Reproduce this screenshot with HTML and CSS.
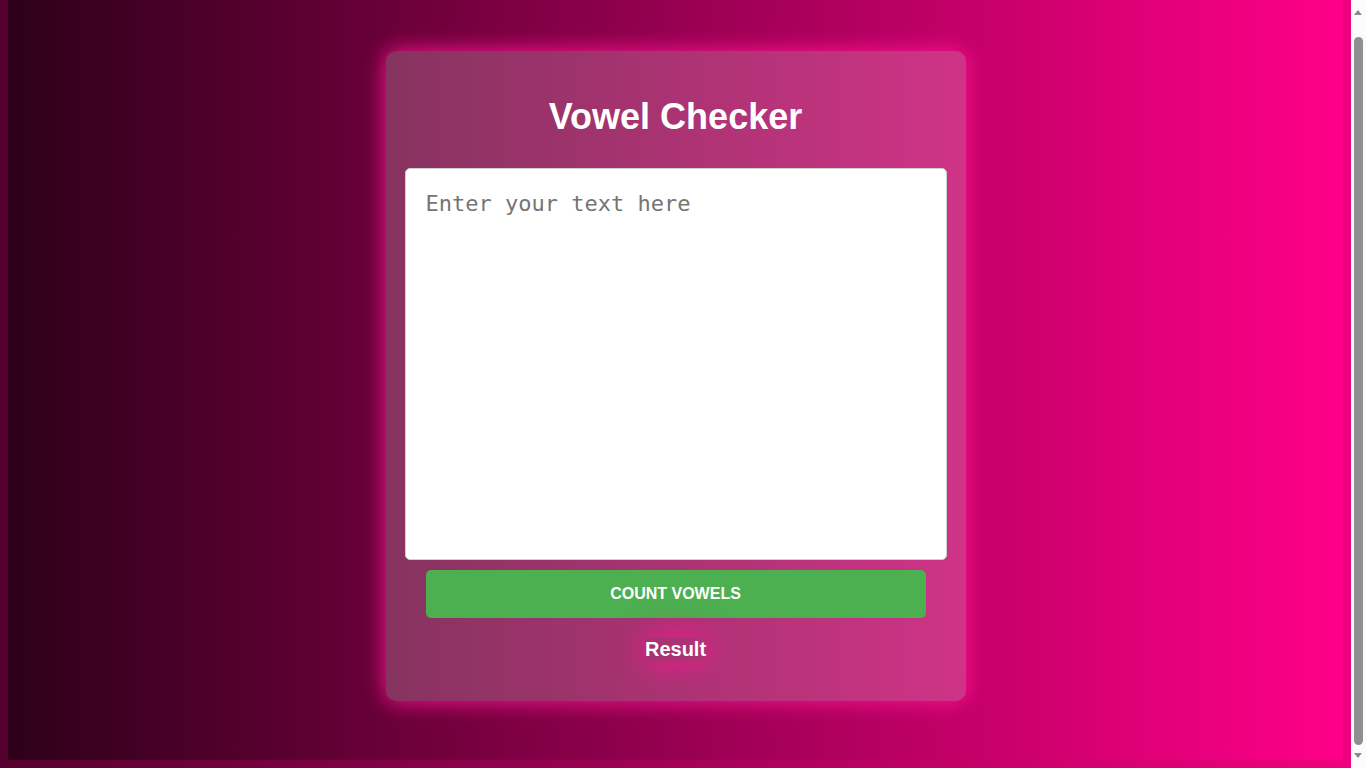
FILE: index.html
```html
<!DOCTYPE html>
<html lang="en">
<head>
<meta charset="utf-8">
<title>Vowel Checker</title>
<link rel="stylesheet" href="styles.css">
</head>
<body>
  <main class="card">
    <h1 class="title">Vowel Checker</h1>
    <textarea class="text-input" placeholder="Enter your text here"></textarea>
    <button class="count-btn" type="button">COUNT VOWELS</button>
    <div class="result">Result</div>
  </main>
  <div class="scrollbar" aria-hidden="true">
    <span class="sb-arrow sb-up"></span>
    <span class="sb-thumb"></span>
    <span class="sb-arrow sb-down"></span>
  </div>
  <script src="script.js"></script>
</body>
</html>
```

FILE: styles.css
```css
html {
  background: linear-gradient(to right, #56002f, #f2007f);
}

body {
  margin: 8px 23px 8px 8px;
  height: 100vh;
  display: flex;
  justify-content: center;
  align-items: center;
  background: linear-gradient(to right, #2e0019, #ff0088);
  font-family: "Liberation Sans", Arial, sans-serif;
}

.card {
  width: 540px;
  padding: 20px;
  display: flex;
  flex-direction: column;
  align-items: center;
  background: rgba(255, 255, 255, 0.2);
  border-radius: 10px;
  box-shadow: 0 0 22px #ff1493;
}

.title {
  margin: 25px 0 31px;
  font-size: 36px;
  font-weight: bold;
  line-height: 41px;
  color: #ffffff;
}

.text-input {
  box-sizing: border-box;
  width: 542px;
  margin: 0 -1px;
  height: 392px;
  padding: 20px;
  border: 1px solid #d0d0d0;
  border-radius: 5px;
  background: #ffffff;
  font-family: "DejaVu Sans Mono", monospace;
  font-size: 22px;
  line-height: 29px;
  resize: none;
  outline: none;
}

.text-input::placeholder {
  color: #757575;
}

.count-btn {
  width: 500px;
  height: 48px;
  margin-top: 10px;
  border: none;
  border-radius: 5px;
  background: #4caf50;
  color: #ffffff;
  font-family: "Liberation Sans", Arial, sans-serif;
  font-size: 16px;
  font-weight: bold;
  cursor: pointer;
}

.result {
  margin: 20px 0;
  font-size: 20px;
  font-weight: bold;
  line-height: 23px;
  color: #ffffff;
  box-shadow: 0 0 30px #ff1493;
}

.scrollbar {
  position: fixed;
  top: 0;
  right: 0;
  width: 15px;
  height: 100vh;
  background: #fbfbfb;
}

.sb-arrow {
  position: absolute;
  left: 3px;
  width: 0;
  height: 0;
  border-left: 4.5px solid transparent;
  border-right: 4.5px solid transparent;
}

.sb-up {
  top: 10px;
  border-bottom: 5px solid #8a8a8a;
}

.sb-down {
  bottom: 10px;
  border-top: 5px solid #8a8a8a;
}

.sb-thumb {
  position: absolute;
  top: 37px;
  bottom: 23px;
  left: 3px;
  width: 9px;
  border-radius: 5px;
  background: #8f8f8f;
}
```

FILE: script.js
```js
window.addEventListener('load', function () {
  window.scrollTo(0, document.documentElement.scrollHeight);
});
window.scrollTo(0, document.documentElement.scrollHeight);
```
